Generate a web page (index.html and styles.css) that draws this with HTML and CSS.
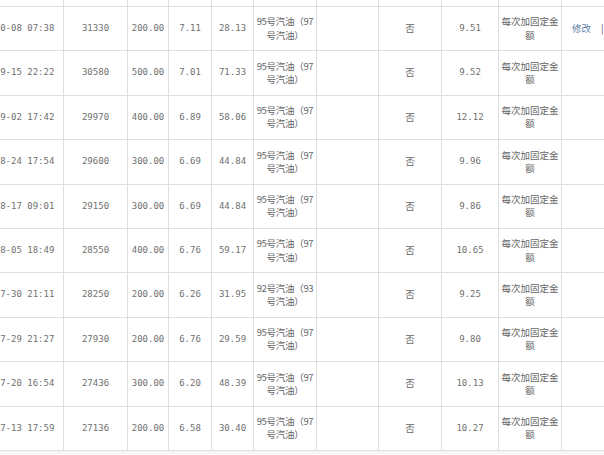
FILE: index.html
```html
<!DOCTYPE html>
<html lang="zh-CN">
<head>
<meta charset="utf-8">
<title>加油记录</title>
<link rel="stylesheet" href="styles.css">
</head>
<body>
<div class="viewport">
<table class="records">
  <colgroup>
    <col class="c-time"><col class="c-odo"><col class="c-amt"><col class="c-price"><col class="c-vol"><col class="c-fuel"><col class="c-note"><col class="c-full"><col class="c-cons"><col class="c-mode"><col class="c-op">
  </colgroup>
  <tbody>
    <tr class="above"><td></td><td></td><td></td><td></td><td></td><td></td><td></td><td></td><td></td><td></td><td></td></tr>
    <tr><td class="num">2014-10-08 07:38</td><td class="num">31330</td><td class="num">200.00</td><td class="num">7.11</td><td class="num">28.13</td><td class="fuel">95号汽油（97<br>号汽油）</td><td></td><td>否</td><td class="num">9.51</td><td class="mode">每次加固定金<br>额</td><td class="ops"><a class="op" href="#">修改</a><span class="sep">|</span><a class="op" href="#">删除</a></td></tr>
    <tr><td class="num">2014-09-15 22:22</td><td class="num">30580</td><td class="num">500.00</td><td class="num">7.01</td><td class="num">71.33</td><td class="fuel">95号汽油（97<br>号汽油）</td><td></td><td>否</td><td class="num">9.52</td><td class="mode">每次加固定金<br>额</td><td></td></tr>
    <tr><td class="num">2014-09-02 17:42</td><td class="num">29970</td><td class="num">400.00</td><td class="num">6.89</td><td class="num">58.06</td><td class="fuel">95号汽油（97<br>号汽油）</td><td></td><td>否</td><td class="num">12.12</td><td class="mode">每次加固定金<br>额</td><td></td></tr>
    <tr><td class="num">2014-08-24 17:54</td><td class="num">29600</td><td class="num">300.00</td><td class="num">6.69</td><td class="num">44.84</td><td class="fuel">95号汽油（97<br>号汽油）</td><td></td><td>否</td><td class="num">9.96</td><td class="mode">每次加固定金<br>额</td><td></td></tr>
    <tr><td class="num">2014-08-17 09:01</td><td class="num">29150</td><td class="num">300.00</td><td class="num">6.69</td><td class="num">44.84</td><td class="fuel">95号汽油（97<br>号汽油）</td><td></td><td>否</td><td class="num">9.86</td><td class="mode">每次加固定金<br>额</td><td></td></tr>
    <tr><td class="num">2014-08-05 18:49</td><td class="num">28550</td><td class="num">400.00</td><td class="num">6.76</td><td class="num">59.17</td><td class="fuel">95号汽油（97<br>号汽油）</td><td></td><td>否</td><td class="num">10.65</td><td class="mode">每次加固定金<br>额</td><td></td></tr>
    <tr><td class="num">2014-07-30 21:11</td><td class="num">28250</td><td class="num">200.00</td><td class="num">6.26</td><td class="num">31.95</td><td class="fuel">92号汽油（93<br>号汽油）</td><td></td><td>否</td><td class="num">9.25</td><td class="mode">每次加固定金<br>额</td><td></td></tr>
    <tr><td class="num">2014-07-29 21:27</td><td class="num">27930</td><td class="num">200.00</td><td class="num">6.76</td><td class="num">29.59</td><td class="fuel">95号汽油（97<br>号汽油）</td><td></td><td>否</td><td class="num">9.80</td><td class="mode">每次加固定金<br>额</td><td></td></tr>
    <tr><td class="num">2014-07-20 16:54</td><td class="num">27436</td><td class="num">300.00</td><td class="num">6.20</td><td class="num">48.39</td><td class="fuel">95号汽油（97<br>号汽油）</td><td></td><td>否</td><td class="num">10.13</td><td class="mode">每次加固定金<br>额</td><td></td></tr>
    <tr><td class="num">2014-07-13 17:59</td><td class="num">27136</td><td class="num">200.00</td><td class="num">6.58</td><td class="num">30.40</td><td class="fuel">95号汽油（97<br>号汽油）</td><td></td><td>否</td><td class="num">10.27</td><td class="mode">每次加固定金<br>额</td><td></td></tr>
  </tbody>
</table>
</div>
</body>
</html>
```
FILE: styles.css
```css
html, body {
  margin: 0;
  padding: 0;
  background: #ffffff;
}

.viewport {
  width: 604px;
  height: 455px;
  overflow: hidden;
  background: #f6f6f6;
}

.records {
  border-collapse: collapse;
  table-layout: fixed;
  width: 666px;
  margin: -38.4px 0 0 -42px;
  background: #ffffff;
  font-family: "Noto Sans CJK SC", sans-serif;
  font-size: 9.5px;
  line-height: 13.3px;
  color: #666666;
}

.c-time { width: 105px; }
.c-odo { width: 64px; }
.c-amt { width: 41px; }
.c-price { width: 43px; }
.c-vol { width: 42px; }
.c-fuel { width: 63px; }
.c-note { width: 62px; }
.c-full { width: 63px; }
.c-cons { width: 57px; }
.c-mode { width: 63px; }
.c-op { width: 63px; }

.records tr {
  height: 44.4px;
}

.records td {
  border: 1px solid #dedede;
  padding: 0;
  text-align: center;
  vertical-align: middle;
  white-space: nowrap;
  overflow: hidden;
}

.records td.num {
  font-family: "DejaVu Sans Mono", monospace;
  font-size: 9px;
  color: #707070;
}

.records td.fuel {
  letter-spacing: -0.3px;
}

.records td.ops {
  text-align: left;
  padding-left: 10px;
}

.op {
  color: #5b7ea8;
  text-decoration: none;
}

.sep {
  margin: 0 10px 0 10px;
  color: #555555;
}
```
